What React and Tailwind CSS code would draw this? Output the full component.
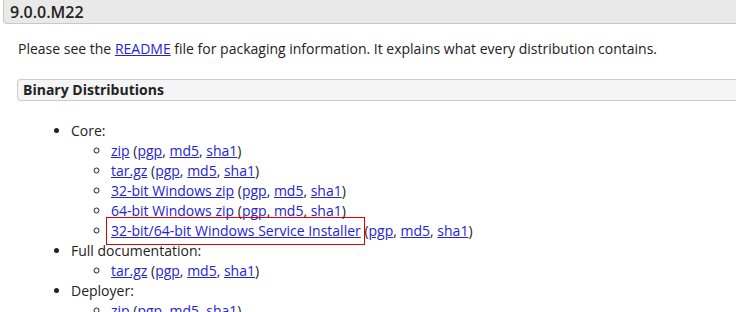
import React from 'react';

const link = 'text-[#2424d6] underline';

function Sums() {
  return (
    <>
      {' '}(<a href="#" className={link}>pgp</a>, <a href="#" className={link}>md5</a>,{' '}
      <a href="#" className={link}>sha1</a>)
    </>
  );
}

function Item({ label, marked }) {
  return (
    <li>
      {marked ? (
        <span className="relative">
          <a href="#" className={link}>{label}</a>
          <span className="absolute left-[-5px] right-[-4px] top-[-4px] bottom-[-5px] border border-[#e00000] pointer-events-none" />
        </span>
      ) : (
        <a href="#" className={link}>{label}</a>
      )}
      <Sums />
    </li>
  );
}

export default function App() {
  return (
    <div className="w-[736px] h-[312px] overflow-hidden bg-white text-[#222] font-['Open_Sans',sans-serif] text-[14px] leading-[20px]">
      {/* Release heading */}
      <div className="ml-[3px] h-[24px] pl-[6px] flex items-center bg-[#e9e9e9] border-l border-b border-[#c8c8c8] rounded-bl-[4px]">
        <h2 className="text-[16px] font-semibold text-[#222] leading-none">9.0.0.M22</h2>
      </div>

      <div className="pl-[17px]">
        <p className="mt-[15px] pl-[1px]">
          Please see the <a href="#" className={link}>README</a> file for packaging information. It explains what every distribution contains.
        </p>

        <div className="mt-[20px] h-[22px] pl-[5px] flex items-center bg-[#f5f5f5] border border-r-0 border-[#cccccc] rounded-l-[4px]">
          <h3 className="font-bold text-[14px] leading-none">Binary Distributions</h3>
        </div>

        <ul className="mt-[20px] pl-[54px] list-disc">
          <li>
            Core:
            <ul className="pl-[40px] list-[circle]">
              <Item label="zip" />
              <Item label="tar.gz" />
              <Item label="32-bit Windows zip" />
              <Item label="64-bit Windows zip" />
              <Item label="32-bit/64-bit Windows Service Installer" marked />
            </ul>
          </li>
          <li>
            Full documentation:
            <ul className="pl-[40px] list-[circle]">
              <Item label="tar.gz" />
            </ul>
          </li>
          <li>
            Deployer:
            <ul className="pl-[40px] list-[circle]">
              <Item label="zip" />
            </ul>
          </li>
        </ul>
      </div>
    </div>
  );
}
